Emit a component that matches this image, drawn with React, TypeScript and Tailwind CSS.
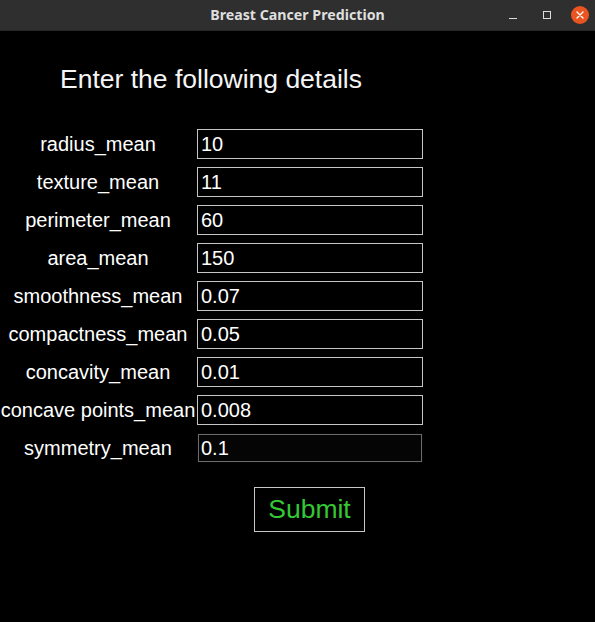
import React from "react";

const fields: [string, string][] = [
  ["radius_mean", "10"],
  ["texture_mean", "11"],
  ["perimeter_mean", "60"],
  ["area_mean", "150"],
  ["smoothness_mean", "0.07"],
  ["compactness_mean", "0.05"],
  ["concavity_mean", "0.01"],
  ["concave points_mean", "0.008"],
  ["symmetry_mean", "0.1"],
];

const TitleBar = () => {
  return (
    <div className="relative h-[31px] bg-[#2f2f2f] flex items-center justify-center border-b border-[#262626]">
      <span className="font-['Noto_Sans',sans-serif] font-bold text-[14.2px] text-[#dfdfdf]">
        Breast Cancer Prediction
      </span>
      <div className="absolute right-0 top-0 h-[31px] flex items-center">
        <div className="w-[8px] h-[1.5px] bg-[#dcdcdc] mt-[6px] mr-[26px]"></div>
        <div className="w-[8px] h-[8px] border border-[#dcdcdc] mr-[20px] mb-[1px]"></div>
        <div className="w-[18px] h-[18px] rounded-full bg-[#e95420] flex items-center justify-center mr-[6px] mb-[1px]">
          <svg width="10" height="10" viewBox="0 0 10 10">
            <path d="M2 2 L8 8 M8 2 L2 8" stroke="#fff" strokeWidth="1.4" strokeLinecap="round" />
          </svg>
        </div>
      </div>
    </div>
  );
};

const App = () => {
  return (
    <div className="w-[595px] h-[622px] bg-black font-['Liberation_Sans',Arial,sans-serif] text-white overflow-hidden">
      <TitleBar />
      <div className="pt-[33px]">
        <h1 className="text-[26.5px] leading-[30px] pl-[60px] text-[#f5f5f5]">
          Enter the following details
        </h1>
        <div className="mt-[35px] flex flex-col gap-[8px]">
          {fields.map(([label, value], i) => (
            <div key={label} className="flex items-center">
              <div className="w-[196px] text-center text-[20px] leading-[30px] whitespace-nowrap">
                {label}
              </div>
              <div
                className={
                  i === fields.length - 1
                    ? "ml-px w-[226px] h-[30px] border border-transparent shadow-[inset_0_0_0_1px_#6b6b6b] bg-[#050505] flex items-center pl-[3px] text-[20px]"
                    : "ml-px w-[226px] h-[30px] border border-[#c6c6c6] flex items-center pl-[3px] text-[20px]"
                }
              >
                {value}
              </div>
            </div>
          ))}
        </div>
        <div className="pl-[254px] mt-[24px]">
          <div className="w-[111px] h-[45px] border border-[#c8c8c8] flex items-center justify-center text-[26.5px] text-[#34c834]">
            Submit
          </div>
        </div>
      </div>
    </div>
  );
};

export default App;
